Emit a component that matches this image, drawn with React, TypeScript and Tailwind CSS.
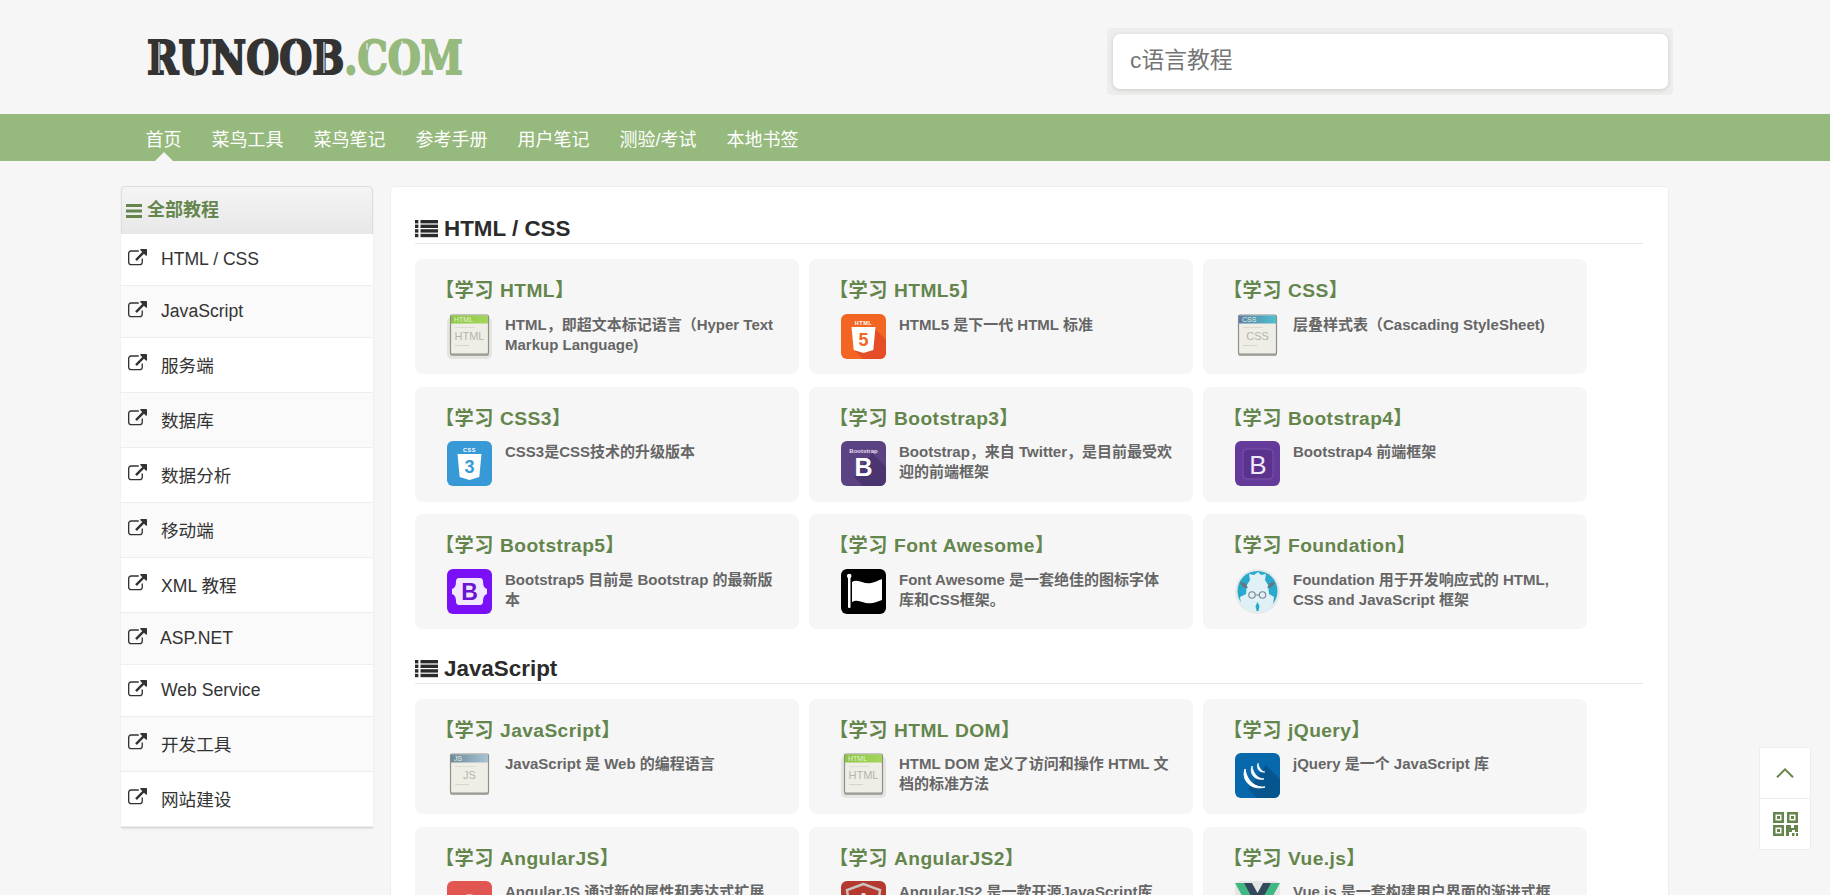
import React from "react";

const FONT = '"Liberation Sans","Noto Sans CJK SC",sans-serif';

function Logo() {
  const cuts: [number, number, number][] = [
    [12, 2, 33], [48, 20, 35], [83, 3, 13], [117, 1, 10], [117, 25, 35], [149, 1, 10], [149, 25, 35],
    [177, 2, 33], [220, 3, 10], [255, 1, 10], [255, 25, 35], [292, 3, 14],
  ];
  return (
    <div className="relative h-[36px] w-[315px]">
      <div
        className="origin-top-left scale-x-[0.824] whitespace-nowrap text-[46px] font-bold leading-[36px] text-[#333333] [-webkit-text-stroke:2px_#333333]"
        style={{ fontFamily: '"DejaVu Serif",serif' }}
      >
        RUNOOB
        <span className="text-[#96b97d] [-webkit-text-stroke:2px_#96b97d]">.COM</span>
      </div>
      <svg width="315" height="36" viewBox="0 0 315 36" className="absolute left-0 top-0">
        {cuts.map(([x, a, b], i) => (
          <line key={i} x1={x} x2={x} y1={a} y2={b} stroke="#f6f6f6" strokeWidth="1.3" strokeOpacity="0.85" />
        ))}
      </svg>
    </div>
  );
}

function ExternalIcon() {
  return (
    <svg width="19" height="19" viewBox="0 0 1792 1792" fill="#333333" className="shrink-0">
      <path d="M1408 928v320q0 119-84.5 203.5T1120 1536H288q-119 0-203.5-84.5T0 1248V416q0-119 84.5-203.5T288 128h704q14 0 23 9t9 23v64q0 14-9 23t-23 9H288q-66 0-113 47t-47 113v832q0 66 47 113t113 47h832q66 0 113-47t47-113V928q0-14 9-23t23-9h64q14 0 23 9t9 23zm384-864v512q0 26-19 45t-45 19-45-19l-176-176-652 652q-10 10-23 10t-23-10L695 983q-10-10-10-23t10-23l652-652-176-176q-19-19-19-45t19-45 45-19h512q26 0 45 19t19 45z" />
    </svg>
  );
}

function ListIcon() {
  return (
    <svg width="23" height="18" viewBox="0 0 23 18" fill="#2b2b2b" className="shrink-0">
      {[0, 4.6, 9.2, 13.8].map((y) => (
        <g key={y}>
          <rect x="0" y={y} width="3.4" height="3.4" />
          <rect x="5.5" y={y} width="17.5" height="3.4" />
        </g>
      ))}
    </svg>
  );
}

function WindowIcon({ label, top, topB, id, plain }: { label: string; top: string; topB: string; id: string; plain?: boolean }) {
  return (
    <svg width="45" height="45" viewBox="0 0 45 45">
      <defs>
        <linearGradient id={id} x1="0" x2="1" y1="0" y2="0">
          <stop offset="0" stopColor={top} />
          <stop offset="1" stopColor={topB} />
        </linearGradient>
      </defs>
      {!plain && <rect x="0" y="3" width="45" height="42" rx="5" fill="#e4e4e1" />}
      <rect x="3" y="38" width="39" height="4" rx="2" fill="#a9a9a5" />
      <rect x="3.5" y="1" width="38" height="39" rx="1.5" fill="#eeede6" stroke="#8f8f88" strokeWidth="1.2" />
      <rect x="4" y="1.5" width="37" height="8" fill={`url(#${id})`} />
      <text x="7" y="8.3" fontFamily='"Liberation Sans",sans-serif' fontSize="7" fill="#e8f2dc">{label}</text>
      <text x="22.5" y="26" textAnchor="middle" fontFamily='"Liberation Sans",sans-serif' fontSize="11" fill="#b5b5ae">{label}</text>
      <rect x="8" y="13" width="20" height="1" fill="#dddcd4" />
      <rect x="8" y="31" width="14" height="1" fill="#d5d4cc" />
    </svg>
  );
}

function Tile({ bg, children, dark }: { bg: string; children?: React.ReactNode; dark?: string }) {
  return (
    <svg width="45" height="45" viewBox="0 0 45 45">
      <rect width="45" height="45" rx="6" fill={bg} />
      {dark && <path d="M31 12 45 26v13a6 6 0 0 1-6 6H22L13 36Z" fill={dark} />}
      {children}
    </svg>
  );
}

function Shield({ digit, color, label }: { digit: string; color: string; label: string }) {
  return (
    <>
      <text x="22.5" y="10.5" textAnchor="middle" fontFamily='"Liberation Sans",sans-serif' fontWeight="700" fontSize="5.5" fill="#ffffff" letterSpacing="0.6">{label}</text>
      <path d="M10.5 13h24l-2.2 23-9.8 3-9.8-3Z" fill="#ffffff" />
      <text x="22.5" y="32" textAnchor="middle" fontFamily='"Liberation Sans",sans-serif' fontWeight="700" fontSize="18" fill={color}>{digit}</text>
    </>
  );
}

function Foundation() {
  return (
    <svg width="45" height="45" viewBox="0 0 45 45">
      <circle cx="22.5" cy="22.5" r="22.4" fill="#e6e9ea" />
      <circle cx="22.5" cy="22" r="20" fill="#29a9cb" />
      <path d="M14 5l5 1 4-3 3 3 5-1-1 6 3 5 1 9 5 3-1 7-6 7H12l-6-7-1-7 6-3 1-9 3-5Z" fill="#dff1f7" />
      <path d="M5 13c1 4 4 6 8 6l-3-5ZM40 13c-1 4-4 6-8 6l3-5Z" fill="#6b7478" />
      <circle cx="17" cy="26" r="3.2" fill="none" stroke="#7b8589" strokeWidth="1.1" />
      <circle cx="27.500" cy="26" r="3.2" fill="none" stroke="#7b8589" strokeWidth="1.1" />
      <path d="M20.200 26h4.100" stroke="#7b8589" strokeWidth="1.1" />
      <path d="M22.500 33l-2 4 1 5h2l1-5Z" fill="#29a9cb" />
    </svg>
  );
}

const icons: Record<string, React.ReactNode> = {
  html: <WindowIcon id="w1" label="HTML" top="#8cc63f" topB="#a4d65e" />,
  css: <WindowIcon id="w2" label="CSS" top="#5a7fa8" topB="#4fc0cf" plain />,
  js: <WindowIcon id="w3" label="JS" top="#6d8a9e" topB="#a9c4d4" plain />,
  dom: <WindowIcon id="w4" label="HTML" top="#8cc63f" topB="#a4d65e" />,
  html5: (
    <Tile bg="#f26522" dark="#e44d26">
      <Shield digit="5" color="#f26522" label="HTML" />
    </Tile>
  ),
  css3: (
    <Tile bg="#379ad6">
      <Shield digit="3" color="#379ad6" label="CSS" />
    </Tile>
  ),
  bs3: (
    <Tile bg="#5b4282" dark="#4a3570">
      <text x="22.5" y="12" textAnchor="middle" fontFamily='"Liberation Sans",sans-serif' fontWeight="700" fontSize="6" fill="#e6dff0">Bootstrap</text>
      <text x="22.5" y="35" textAnchor="middle" fontFamily='"Liberation Sans",sans-serif' fontWeight="700" fontSize="25" fill="#ffffff">B</text>
    </Tile>
  ),
  bs4: (
    <Tile bg="#643a9b">
      <rect x="8" y="8" width="30" height="30" rx="4" fill="#5b338e" stroke="#7a52ad" strokeWidth="1" />
      <text x="23" y="33" textAnchor="middle" fontFamily='"Liberation Sans",sans-serif' fontSize="26" fill="#f0e8fa">B</text>
    </Tile>
  ),
  bs5: (
    <Tile bg="#7a10f7">
      <path d="M12 9h21c2 0 3 1.500 3 3.500 0 4 1 6.500 4 7.500v5c-3 1-4 3.500-4 7.500 0 2-1 3.500-3 3.500H12c-2 0-3-1.500-3-3.500 0-4-1-6.500-4-7.500v-5c3-1 4-3.500 4-7.500C9 10.500 10 9 12 9Z" fill="#f3e6ff" />
      <text x="22.500" y="31" textAnchor="middle" fontFamily='"Liberation Sans",sans-serif' fontSize="23" fontWeight="700" fill="#6a15d1">B</text>
    </Tile>
  ),
  fa: (
    <Tile bg="#000000">
      <rect x="7" y="6" width="2.500" height="33" rx="1" fill="#ffffff" />
      <circle cx="8.200" cy="7" r="2.300" fill="#ffffff" />
      <path d="M11 13c6-4 12 3 19 1 4-.8 6-2 11-4v21c-5 2-8 3-12 3.200-7 .5-12-5-18-1.200Z" fill="#ffffff" />
    </Tile>
  ),
  foundation: <Foundation />,
  jquery: (
    <Tile bg="#0868ac" dark="#05568f">
      <g fill="#ffffff">
        <path d="M10 16c-4 11 6 22 20 18-9 1-18-5-20-18Z" stroke="#ffffff" strokeWidth="1" />
        <path d="M17 13c-3 8 3 15 12 13-7-.5-11-6-12-13Z" stroke="#ffffff" strokeWidth="0.8" />
        <path d="M23 10c-2 5 1 10 7 9-4-1-6-4-7-9Z" stroke="#ffffff" strokeWidth="0.6" />
      </g>
    </Tile>
  ),
  angular: (
    <Tile bg="#e25651">
      <circle cx="22.500" cy="22" r="8" fill="none" stroke="#f3b5b2" strokeWidth="2" />
    </Tile>
  ),
  angular2: (
    <Tile bg="#b43a30">
      <path d="M22.500 3 6 9l3 22 13.500 8 13.500-8 3-22Z" fill="none" stroke="#c9c2bd" strokeWidth="2.500" />
      <text x="22.500" y="25" textAnchor="middle" fontFamily='"Liberation Sans",sans-serif' fontWeight="700" fontSize="18" fill="#f3d9d6">A</text>
    </Tile>
  ),
  vue: (
    <svg width="45" height="45" viewBox="0 0 45 45">
      <rect width="45" height="45" rx="6" fill="#e6e6e6" />
      <path d="M0 2h11l11.500 20L34 2h11L22.500 43Z" fill="#41b883" />
      <path d="M9 2h8l5.500 10L28 2h8L22.500 27Z" fill="#35495e" />
    </svg>
  ),
};

type Card = { title: string; icon: string; desc: string; row?: string };

const htmlCards: Card[] = [
  { title: "【学习 HTML】", icon: "html", desc: "HTML，即超文本标记语言（Hyper Text\nMarkup Language)" },
  { title: "【学习 HTML5】", icon: "html5", desc: "HTML5 是下一代 HTML 标准" },
  { title: "【学习 CSS】", icon: "css", desc: "层叠样式表（Cascading StyleSheet)" },
  { title: "【学习 CSS3】", icon: "css3", desc: "CSS3是CSS技术的升级版本" },
  { title: "【学习 Bootstrap3】", icon: "bs3", desc: "Bootstrap，来自 Twitter，是目前最受欢\n迎的前端框架" },
  { title: "【学习 Bootstrap4】", icon: "bs4", desc: "Bootstrap4 前端框架" },
  { title: "【学习 Bootstrap5】", icon: "bs5", desc: "Bootstrap5 目前是 Bootstrap 的最新版\n本" },
  { title: "【学习 Font Awesome】", icon: "fa", desc: "Font Awesome 是一套绝佳的图标字体\n库和CSS框架。" },
  { title: "【学习 Foundation】", icon: "foundation", desc: "Foundation 用于开发响应式的 HTML,\nCSS and JavaScript 框架" },
];

const jsCards: Card[] = [
  { title: "【学习 JavaScript】", icon: "js", desc: "JavaScript 是 Web 的编程语言", row: "mt-[11px]" },
  { title: "【学习 HTML DOM】", icon: "dom", desc: "HTML DOM 定义了访问和操作 HTML 文\n档的标准方法", row: "mt-[11px]" },
  { title: "【学习 jQuery】", icon: "jquery", desc: "jQuery 是一个 JavaScript 库", row: "mt-[11px]" },
  { title: "【学习 AngularJS】", icon: "angular", desc: "AngularJS 通过新的属性和表达式扩展\nHTML" },
  { title: "【学习 AngularJS2】", icon: "angular2", desc: "AngularJS2 是一款开源JavaScript库" },
  { title: "【学习 Vue.js】", icon: "vue", desc: "Vue.js 是一套构建用户界面的渐进式框\n架" },
];

const sideRows = [
  { label: "HTML / CSS", cls: "h-[52px] bg-white", text: "ml-[14px]" },
  { label: "JavaScript", cls: "h-[52px] bg-[#fafafa]", text: "ml-[14px]" },
  { label: "服务端", cls: "h-[55px] bg-white", text: "ml-[14px] pt-[2px]" },
  { label: "数据库", cls: "h-[55px] bg-[#fafafa]", text: "ml-[14px] pt-[2px]" },
  { label: "数据分析", cls: "h-[55px] bg-white", text: "ml-[14px] pt-[2px]" },
  { label: "移动端", cls: "h-[55px] bg-[#fafafa]", text: "ml-[14px] pt-[2px]" },
  { label: "XML 教程", cls: "h-[55px] bg-white", text: "ml-[14px] pt-[2px]" },
  { label: "ASP.NET", cls: "h-[52px] bg-[#fafafa]", text: "ml-[13px]" },
  { label: "Web Service", cls: "h-[52px] bg-white", text: "ml-[14px]" },
  { label: "开发工具", cls: "h-[55px] bg-[#fafafa]", text: "ml-[14px] pt-[2px]" },
  { label: "网站建设", cls: "h-[55px] bg-white", text: "ml-[14px] pt-[2px]" },
];

const navItems = ["首页", "菜鸟工具", "菜鸟笔记", "参考手册", "用户笔记", "测验/考试", "本地书签"];

function CardGrid({ cards }: { cards: Card[] }) {
  return (
    <div className="mt-[15px] grid grid-cols-[384px_384px_384px] gap-x-[10px] gap-y-[12.5px]">
      {cards.map((c) => (
        <div key={c.title} className="h-[115px] overflow-hidden rounded-[8px] bg-[#f6f6f6] px-[20px] pt-[21px]">
          <div className="h-[22px] text-[19.2px] font-bold leading-[22px] tracking-[0.4px] text-[#64854c] [word-spacing:0.6px]">{c.title}</div>
          <div className={`flex ${c.row ?? "mt-[11.9px]"}`}>
            <div className="ml-[12px] h-[45px] w-[45px] shrink-0">{icons[c.icon]}</div>
            <div className="ml-[13px] mt-[1px] whitespace-pre-line text-[15px] font-bold leading-[20px] text-[#666666]">{c.desc}</div>
          </div>
        </div>
      ))}
    </div>
  );
}

function SectionTitle({ children }: { children: string }) {
  return (
    <h2 className="flex h-[31px] items-center gap-[6px] border-b border-[#e8e8e8] pt-[1px] text-[22.4px] font-bold leading-[30px] text-[#2b2b2b]">
      <ListIcon />
      {children}
    </h2>
  );
}

function QrIcon() {
  return (
    <svg width="25" height="24" viewBox="0 0 25 24" fill="#64854c">
      <path d="M0 0h11v11H0Zm2.500 2.500v6h6v-6Z" fillRule="evenodd" />
      <rect x="4" y="4" width="3" height="3" />
      <path d="M14 0h11v11H14Zm2.500 2.500v6h6v-6Z" fillRule="evenodd" />
      <rect x="18" y="4" width="3" height="3" />
      <path d="M0 13h11v11H0Zm2.500 2.500v6h6v-6Z" fillRule="evenodd" />
      <rect x="4" y="17" width="3" height="3" />
      <path d="M13 13h5v3h3v-3h4v7h-3v-2h-3v2h-3v4h-3Z" />
      <rect x="19" y="21" width="2.500" height="3" />
      <rect x="23" y="21" width="2" height="3" />
    </svg>
  );
}

export default function App() {
  return (
    <div className="relative h-[895px] w-[1830px] overflow-hidden bg-[#f6f6f6]" style={{ fontFamily: FONT }}>
      <header className="flex h-[114px] items-start justify-between pl-[147px] pr-[157px]">
        <div className="pt-[40px]">
          <Logo />
        </div>
        <div className="mt-[28px] h-[67px] w-[566px] rounded-[4px] bg-[#ededeb] pb-[6px] pl-[6px] pr-[5px] pt-[6px]">
          <div className="flex h-[55px] items-center rounded-[7px] bg-white pb-[2px] pl-[17px] text-[22.8px] text-[#757575] shadow-[0_1px_4px_rgba(0,0,0,0.15)]">
            c语言教程
          </div>
        </div>
      </header>

      <nav className="flex h-[47px] bg-[#96b97d] pl-[130.5px]">
        {navItems.map((n, i) => (
          <a key={n} className="relative block px-[15px] pt-[5px] text-[18px] leading-[42px] text-white">
            {n}
            {i === 0 && (
              <span className="absolute bottom-0 left-1/2 h-0 w-0 -translate-x-1/2 border-x-[9px] border-b-[9px] border-x-transparent border-b-[#f6f6f6]" />
            )}
          </a>
        ))}
      </nav>

      <div className="flex gap-[17px] pl-[121px] pt-[25px]">
        <aside className="w-[252px] shrink-0 self-start overflow-hidden rounded-t-[4px] border-b border-[#d8d8d8] shadow-[0_1px_2px_rgba(0,0,0,0.08)]">
          <div className="flex h-[48px] items-center gap-[5px] rounded-t-[4px] border border-b-0 border-[#dddddd] bg-gradient-to-b from-[#f4f4f4] to-[#e8e8e8] pl-[4px] text-[18px] font-bold text-[#64854c]">
            <svg width="16" height="14" viewBox="0 0 16 14" fill="#64854c" className="shrink-0">
              <rect y="0" width="16" height="3" />
              <rect y="5.500" width="16" height="3" />
              <rect y="11" width="16" height="3" />
            </svg>
            全部教程
          </div>
          {sideRows.map((r) => (
            <div key={r.label} className={`flex items-center border-b border-[#eeeeee] pl-[7px] text-[17.6px] text-[#333333] ${r.cls}`}>
              <span className="-mt-[3px] block">
                <ExternalIcon />
              </span>
              <span className={r.text}>{r.label}</span>
            </div>
          ))}
        </aside>

        <main className="h-[800px] w-[1279px] shrink-0 rounded-[4px] border border-[#eeeeee] bg-white pl-[24px] pr-[25px] pt-[26px]">
          <SectionTitle>HTML / CSS</SectionTitle>
          <CardGrid cards={htmlCards} />
          <div className="mt-[24px]">
            <SectionTitle>JavaScript</SectionTitle>
            <CardGrid cards={jsCards} />
          </div>
        </main>
      </div>

      <div className="absolute left-[1759px] top-[747px] w-[52px] border border-[#eeeeee] bg-white">
        <div className="flex h-[51px] items-center justify-center border-b border-[#eeeeee]">
          <svg width="18" height="10" viewBox="0 0 18 10" fill="none" stroke="#64854c" strokeWidth="2">
            <path d="M1 9.300 9 1.400l8 7.900" />
          </svg>
        </div>
        <div className="flex h-[50px] items-center justify-center">
          <QrIcon />
        </div>
      </div>
    </div>
  );
}
